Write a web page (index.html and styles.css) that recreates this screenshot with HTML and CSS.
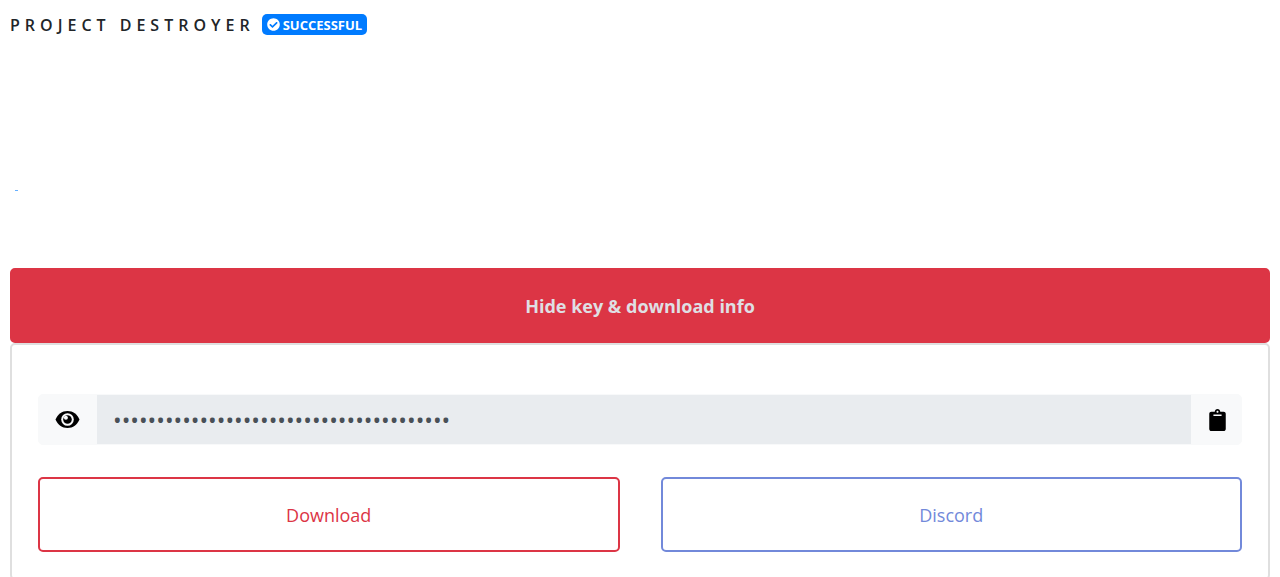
FILE: index.html
```
<!DOCTYPE html>
<html lang="en">
<head>
    <meta charset="UTF-8">
    <meta name="viewport" content="width=device-width, initial-scale=1">
    <title>Project Destroyer</title>
    <link rel="stylesheet" href="styles.css">
</head>
<body>
<header class="header">
    <h1 class="title">PROJECT DESTROYER</h1>
    <span class="badge">
        <svg class="badge-icon" viewBox="0 0 512 512" aria-hidden="true">
            <path fill="currentColor" d="M504 256c0 137-111 248-248 248S8 393 8 256 119 8 256 8s248 111 248 248zM227.300 387.300l184-184c6.200-6.200 6.200-16.400 0-22.600l-22.600-22.600c-6.200-6.200-16.400-6.200-22.600 0L216 308.100l-70.100-70.100c-6.200-6.200-16.400-6.200-22.600 0l-22.600 22.600c-6.200 6.200-6.200 16.400 0 22.600l104 104c6.200 6.300 16.400 6.300 22.600.1z"/>
        </svg>
        SUCCESSFUL
    </span>
</header>
<div class="progress">
    <div class="progress-mark"></div>
</div>
<button class="btn btn-toggle" type="button" aria-expanded="true" aria-controls="keyInfo">Hide key &amp; download info</button>
<section id="keyInfo" class="card">
    <div class="key-group">
        <button class="key-btn key-show" type="button" aria-label="Show key">
            <svg class="eye-icon" viewBox="0 0 24 17" aria-hidden="true">
                <path d="M12 0C6.500 0 2.200 3.400 0 8.500 2.200 13.600 6.500 17 12 17s9.800-3.400 12-8.500C21.800 3.400 17.500 0 12 0z"/>
                <circle cx="12" cy="8.500" r="6.300" fill="#f8f9fa"/>
                <circle cx="12" cy="8.500" r="4.300"/>
                <circle cx="10.400" cy="6.700" r="2" fill="#f8f9fa"/>
            </svg>
        </button>
        <input class="key-input" type="password" aria-label="License key" value="000000000000000000000000000000000000000" disabled>
        <button class="key-btn key-copy" type="button" aria-label="Copy key">
            <svg class="clipboard-icon" viewBox="0 0 384 512" aria-hidden="true">
                <path d="M384 112v352c0 26.500-21.500 48-48 48H48c-26.500 0-48-21.500-48-48V112c0-26.500 21.500-48 48-48h80c0-35.300 28.700-64 64-64s64 28.700 64 64h80c26.500 0 48 21.500 48 48zM192 40c-13.300 0-24 10.700-24 24s10.700 24 24 24 24-10.700 24-24-10.700-24-24-24m96 114v-20a6 6 0 0 0-6-6H102a6 6 0 0 0-6 6v20a6 6 0 0 0 6 6h180a6 6 0 0 0 6-6z"/>
            </svg>
        </button>
    </div>
    <div class="links">
        <a class="btn btn-download" href="#download">Download</a>
        <a class="btn btn-discord" href="#discord">Discord</a>
    </div>
</section>
</body>
</html>
```
FILE: styles.css
```
* {
    box-sizing: border-box;
}

body {
    margin: 0;
    padding: 14px 10px 0;
    background: #fff;
    color: #212529;
    font-family: "Segoe UI", "Open Sans", sans-serif;
    font-size: 18px;
}

.header {
    display: flex;
    align-items: center;
    gap: 7px;
    height: 21px;
}

.title {
    margin: 0;
    font-size: 16px;
    font-weight: 600;
    line-height: 20px;
    letter-spacing: 5px;
}

.badge {
    display: flex;
    align-items: center;
    gap: 3px;
    height: 21px;
    padding: 0 5px;
    border-radius: 5px;
    background: #007bff;
    color: #fff;
    font-size: 13px;
    font-weight: 700;
}

.badge-icon {
    width: 13px;
    height: 13px;
}

.progress {
    height: 233px;
    padding: 155px 5px 0;
}

.progress-mark {
    width: 3px;
    height: 1px;
    background: #66b0ff;
}

.btn {
    display: flex;
    align-items: center;
    justify-content: center;
    height: 75px;
    border: 2px solid;
    border-radius: 5px;
    font-family: inherit;
    font-size: 18px;
    text-decoration: none;
}

.btn-toggle {
    width: 100%;
    border-color: #dc3545;
    background: #dc3545;
    color: #dfdfe3;
    font-weight: 700;
}

.card {
    padding: 49px 26px 26px;
    border: 2px solid #dfdfdf;
    border-radius: 5px;
}

.key-group {
    display: flex;
    height: 51px;
    border: 1px solid #f8f9fa;
    border-radius: 5px;
    background: #f8f9fa;
}

.key-btn {
    display: flex;
    align-items: center;
    justify-content: center;
    padding: 0;
    border: 0;
    background: none;
}

.key-show {
    width: 58px;
    padding-right: 2px;
}

.key-copy {
    width: 50px;
    padding-left: 2px;
}

.eye-icon {
    width: 25px;
    height: 17px;
}

.clipboard-icon {
    width: 17px;
    height: 22px;
}

.key-input {
    flex: 1;
    min-width: 0;
    padding: 0 16px;
    border: 0;
    background: #e9ecef;
    color: #495057;
    font-family: inherit;
    font-size: 23px;
}

.links {
    display: grid;
    grid-template-columns: 1fr 1fr;
    gap: 41px;
    margin-top: 32px;
}

.btn-download {
    border-color: #dc3545;
    color: #dc3545;
}

.btn-discord {
    border-color: #7289da;
    color: #7289da;
}
```
